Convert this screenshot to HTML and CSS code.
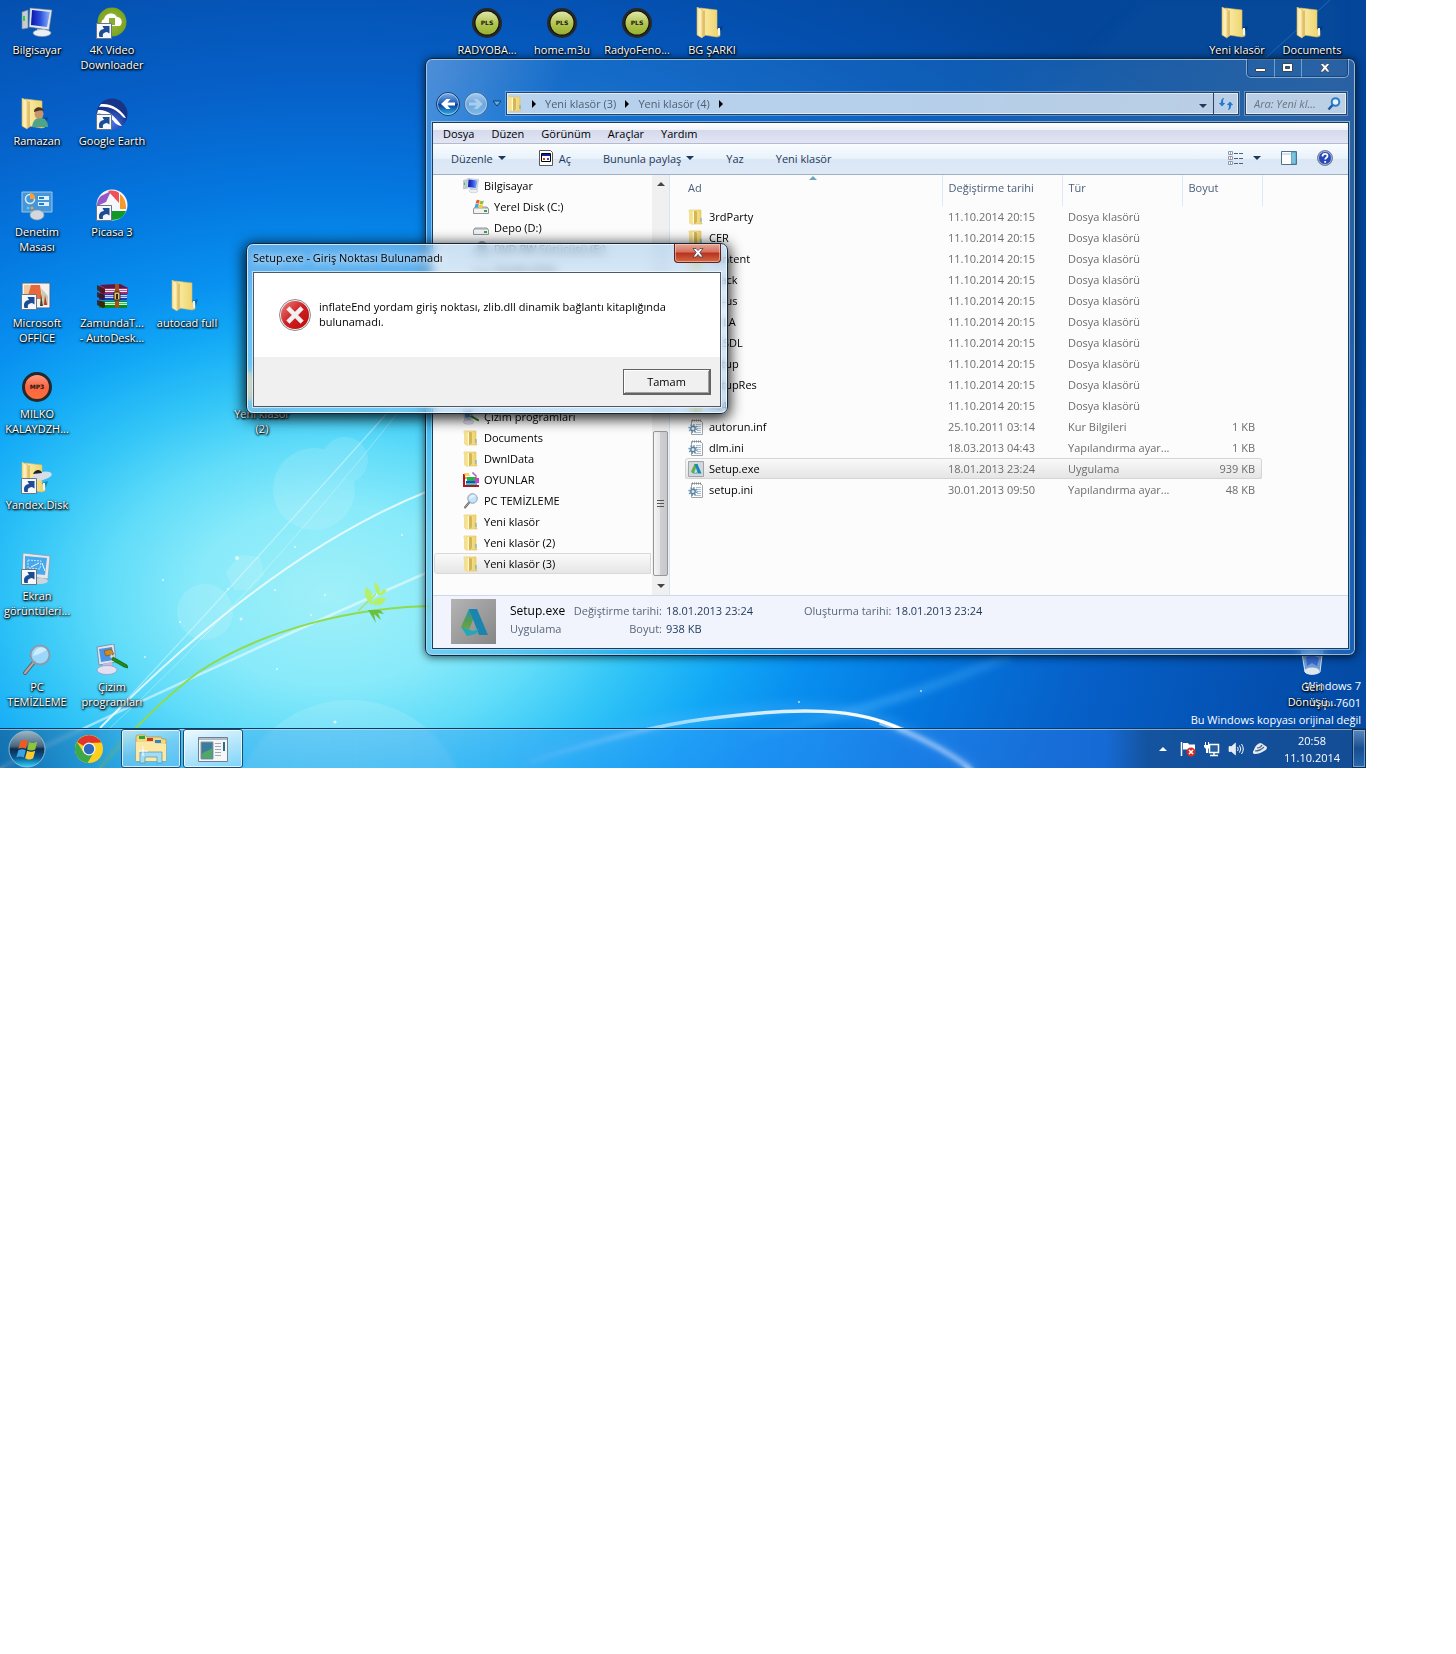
FILE: index.html
```html
<!DOCTYPE html>
<html lang="tr">
<head>
    <meta charset="UTF-8">
    <meta name="viewport" content="width=device-width, initial-scale=1.0">
    <title>Setup.exe - Giriş Noktası Bulunamadı</title>
    <link rel="stylesheet" href="styles.css">
</head>
<body>
    <!-- Shared icons -->
    <svg class="sprite" aria-hidden="true">
        <defs>
            <linearGradient id="g-folder" x1="0" x2="1"><stop offset="0" stop-color="#fdf0ae"/><stop offset="1" stop-color="#ecd068"/></linearGradient>
            <linearGradient id="g-leaf" x1="0" x2="1"><stop offset="0" stop-color="#f5dd90"/><stop offset=".5" stop-color="#fff3c0"/><stop offset="1" stop-color="#eccb74"/></linearGradient>
            <linearGradient id="g-screen" x1="0" x2="1"><stop offset="0" stop-color="#0a14a8"/><stop offset=".5" stop-color="#2b50e0"/><stop offset="1" stop-color="#8fb4f6"/></linearGradient>
            <linearGradient id="g-pls" x1="0" y1="0" x2="0" y2="1"><stop offset="0" stop-color="#dfe6a8"/><stop offset=".5" stop-color="#b4c654"/><stop offset="1" stop-color="#98b030"/></linearGradient>
            <linearGradient id="g-mp3" x1="0" y1="0" x2="0" y2="1"><stop offset="0" stop-color="#ff9a80"/><stop offset=".5" stop-color="#f86444"/><stop offset="1" stop-color="#ff7038"/></linearGradient>
            <linearGradient id="g-nav" x1="0" y1="0" x2="0" y2="1"><stop offset="0" stop-color="#7fb0e8"/><stop offset=".48" stop-color="#1f5cb4"/><stop offset=".5" stop-color="#083a92"/><stop offset="1" stop-color="#2cb8f4"/></linearGradient>
            <linearGradient id="g-glass" x1="0" y1="0" x2="0" y2="1"><stop offset="0" stop-color="#b4d4f0"/><stop offset=".5" stop-color="#74aadc"/><stop offset="1" stop-color="#86c0ea"/></linearGradient>
            <linearGradient id="g-error" x1="0" y1="0" x2="1" y2="1"><stop offset="0" stop-color="#f08080"/><stop offset=".5" stop-color="#cc1f22"/><stop offset="1" stop-color="#c00a0a"/></linearGradient>
            <linearGradient id="g-adsk" x1="0" y1="0" x2="1" y2="1"><stop offset="0" stop-color="#b4b4b4"/><stop offset="1" stop-color="#868686"/></linearGradient>
            <linearGradient id="g-aleft" x1="0" y1="0" x2="0" y2="1"><stop offset="0" stop-color="#1a9ac0"/><stop offset=".5" stop-color="#5a9a50"/><stop offset="1" stop-color="#6aae4c"/></linearGradient>
            <linearGradient id="g-orb" x1="0" y1="0" x2="0" y2="1"><stop offset="0" stop-color="#9fb6c6"/><stop offset=".42" stop-color="#48687f"/><stop offset=".5" stop-color="#0c2b4c"/><stop offset=".75" stop-color="#0b5a94"/><stop offset="1" stop-color="#29d8ff"/></linearGradient>
            <radialGradient id="g-earth" cx=".5" cy=".8"><stop offset="0" stop-color="#4a74f0"/><stop offset="1" stop-color="#183488"/></radialGradient>
            <radialGradient id="g-green"><stop offset="0" stop-color="#9cc43c"/><stop offset="1" stop-color="#7aa020"/></radialGradient>
        </defs>

        <symbol id="i-folder" viewBox="4 0 32 32">
            <path d="M20 30l9-5 2-6-6 2z" fill="#001a40" opacity=".35"/>
            <path d="M8 1l17 2v19l3 1v6l-3 1-13-2z" fill="url(#g-folder)" stroke="#d8bc60" stroke-width=".6"/>
            <path d="M5 0l6 3v27l-1 1-5-3z" fill="url(#g-leaf)" stroke="#d8b860" stroke-width=".6"/>
            <path d="M11 4l2-1v26l-2 1z" fill="#dfc06c"/>
            <path d="M26 21h2v7h-2z" fill="#eaf6ff"/>
        </symbol>
        <symbol id="i-folder-sm" viewBox="0 0 16 16">
            <path d="M1 1h12v12l1 1v1H3z" fill="url(#g-folder)" stroke="#e0c060" stroke-width=".6"/>
            <path d="M1 1l3 1v13.500L1 14z" fill="#f4e092"/>
            <path d="M6 2h2l1 1v10l-2 2H6z" fill="#d6b654"/>
            <path d="M5 2h1v13H5z" fill="#fff8d0"/>
            <path d="M12.500 9h1v4h-1z" fill="#5aa8d8"/>
        </symbol>
        <symbol id="i-shortcut" viewBox="0 0 16 16">
            <path d="M.5.5h15v15H.5z" fill="#f4f8fc" stroke="#6a7684"/>
            <path d="M3.500 14C2 9.500 4 6.500 8 6L6.500 3h7v7.500L11 8.900C7 9.500 6.500 11 7 14z" fill="#1c4c94"/>
        </symbol>
        <symbol id="i-pc" viewBox="0 0 32 32">
            <path d="M1 5l6-2v18l-6 1z" fill="#c4ccd4" stroke="#7c8894" stroke-width=".6"/>
            <path d="M2 9h2v5H2z" fill="#30d040"/>
            <path d="M9 1l22 2-3 20-20-3z" fill="#dfe7ef" stroke="#6c7c90" stroke-width=".6"/>
            <path d="M11 3l18 2-3 15-16-2z" fill="url(#g-screen)"/>
            <path d="M16 22h8v4h-8z" fill="#c2c8d0"/>
            <ellipse cx="21" cy="26" rx="9" ry="3.500" fill="#eceff3" stroke="#9098a4" stroke-width=".6"/>
        </symbol>
        <symbol id="i-magnifier" viewBox="0 0 32 32">
            <path d="M13 18L4 29" stroke="#5c6068" stroke-width="4" stroke-linecap="round"/>
            <path d="M13 18L4 29" stroke="#b8a8a0" stroke-width="2" stroke-linecap="round"/>
            <circle cx="19" cy="11" r="9.500" fill="#b4dcfa" fill-opacity=".8" stroke="#8a9cac" stroke-width="2"/>
            <path d="M12 12c5-1 8-3 14-6-3-4-12-4-14 6z" fill="#fff" opacity=".5"/>
        </symbol>
        <symbol id="i-paint" viewBox="0 0 32 32">
            <path d="M1 3l17-3 2 18-17 3z" fill="#dfe6ee" stroke="#7c8090" stroke-width=".8"/>
            <path d="M3 5l13-2 2 13-13 2z" fill="#4a94e4"/>
            <path d="M7 20l9-2v6H7z" fill="#c4bcd8"/>
            <ellipse cx="11" cy="26" rx="10" ry="4.500" fill="#e4e0f4" stroke="#9890b4" stroke-width=".7"/>
            <path d="M8 7l7-2 3 5-8 2z" fill="#d08a20" stroke="#7a4a10" stroke-width=".6"/>
            <path d="M15 10l5 4-2 2-4-3z" fill="#c8d8e8"/>
            <path d="M17 13l14 8 1 3-4-1-12-7z" fill="#1f8c14" stroke="#0c5008" stroke-width=".6"/>
        </symbol>
        <symbol id="i-rar" viewBox="0 0 32 32">
            <path d="M4 5l20-1 8 4v6H4z" fill="#9a3070"/><path d="M4 5l20-1 8 4H9z" fill="#5a1848"/><path d="M9 9h22v3H9z" fill="#f4e4f0"/><path d="M9 10h22v1H9z" fill="#a86898"/>
            <path d="M3 14h28v6H3z" fill="#1838c0"/><path d="M8 15h23v3H8z" fill="#c8d8ff"/><path d="M8 16h23v1H8z" fill="#5878d8"/>
            <path d="M3 21h28v7H3z" fill="#0c8a18"/><path d="M8 22h23v3H8z" fill="#c8f8d0"/><path d="M8 23h23v1H8z" fill="#48c058"/>
            <path d="M1 5l8 4v4l-2 1-6-4zM1 12l8 3v4l-2 1-6-3zM1 20l8 2v5l-2 1-6-3z" fill="#401008" opacity=".8"/>
            <path d="M19 4h4v24h-4z" fill="#a05020"/><path d="M18 12h6v8h-6z" fill="#d8c070" stroke="#402008"/><path d="M20 14h2v5h-2z" fill="#402008"/>
        </symbol>
        <symbol id="i-oyunlar" viewBox="0 0 16 16">
            <path d="M0 2h2v11h14v2H0z" fill="#b81420"/><path d="M1 1h5l1 3H2z" fill="#f4d070"/>
            <path d="M2 5h12v2H2z" fill="#f0a020"/><path d="M4 5h9v4H4z" fill="#20b840"/><path d="M3 9h10v2H3z" fill="#2848d0"/>
            <path d="M12 6h4v5h-4z" fill="#c840d0"/><path d="M3 11h11v2H3z" fill="#30c8c0"/><path d="M9 1h2v2h2v2" fill="none" stroke="#b030c0"/>
        </symbol>
        <symbol id="i-ini" viewBox="0 0 16 16">
            <path d="M3.500 1.500h9l2 2v12h-11z" fill="#fcfcfc" stroke="#a0a4a8"/>
            <path d="M4 1.500h9" stroke="#808488" stroke-dasharray="1 1" stroke-width="2"/>
            <path d="M8 5.500h5M9 7.500h4M9 9.500h4M9 11.500h4M7 13.500h6" stroke="#a8c0d4"/>
            <circle cx="5" cy="9.500" r="3.600" fill="none" stroke="#6f93ae" stroke-width="2" stroke-dasharray="1.400 1.400"/>
            <circle cx="5" cy="9.500" r="2.200" fill="#dce8f0" stroke="#5c82a0" stroke-width="1.400"/>
        </symbol>
        <symbol id="i-autodesk" viewBox="0 0 45 45">
            <path d="M0 0h45v45H0z" fill="url(#g-adsk)"/>
            <path d="M18 10h8L17 34l-7-6z" fill="url(#g-aleft)"/>
            <path d="M18 10h8l11 26h-9z" fill="#1a86b0"/>
            <path d="M10 28l12 4 6-2-3 5-9 2z" fill="#22a8b8"/>
        </symbol>
        <symbol id="i-disk" viewBox="0 0 16 16">
            <path d="M2 8h12l1.500 2v4.500H.5V10z" fill="#c8ccd0" stroke="#6c7278" stroke-width=".7"/>
            <path d="M1 10h14v4H1z" fill="#f0f2f4"/><path d="M11 11h3v2h-3z" fill="#3aa040"/>
        </symbol>
        <symbol id="i-flag" viewBox="0 0 40 40">
            <path d="M8 8c5-3 8-2 11 0l-3 11c-4-2-7-2-11 0z" fill="#ee5a24"/>
            <path d="M21 9c4 2 7 2 12-1l-3 12c-4 2-8 2-12 0z" fill="#8cc43c"/>
            <path d="M5 21c4-2 7-2 11 0l-3 11c-4-2-7-2-11 0z" fill="#38a4e4"/>
            <path d="M18 22c4 2 8 2 12 0l-3 11c-5 3-8 2-12 0z" fill="#fcc82c"/>
        </symbol>
        <symbol id="i-pls" viewBox="0 0 32 32">
            <circle cx="16" cy="16" r="15" fill="#26282a"/><circle cx="16" cy="16" r="12.500" fill="#0c0e08"/>
            <circle cx="16" cy="16" r="11.500" fill="url(#g-pls)"/>
        </symbol>
    </svg>

    <main class="desktop">
        <!-- Wallpaper -->
        <svg class="wallpaper" viewBox="0 0 1366 768" preserveAspectRatio="xMidYMid slice" aria-hidden="true">
            <defs>
                <radialGradient id="w-sky" gradientUnits="userSpaceOnUse" cx="0" cy="0" r="1" gradientTransform="translate(330 595) scale(1120 750)">
                    <stop offset="0" stop-color="#a0f0f8"/><stop offset=".12" stop-color="#88eafa"/><stop offset=".2" stop-color="#60dcf9"/>
                    <stop offset=".28" stop-color="#30c4f7"/><stop offset=".36" stop-color="#12a8f6"/><stop offset=".43" stop-color="#0890f0"/>
                    <stop offset=".54" stop-color="#0478e0"/><stop offset=".68" stop-color="#0660c8"/><stop offset=".84" stop-color="#0450b0"/><stop offset="1" stop-color="#03469a"/>
                </radialGradient>
                <linearGradient id="w-arc" x1="0" x2="1"><stop offset="0" stop-color="#fff" stop-opacity=".1"/><stop offset=".5" stop-color="#fff" stop-opacity=".8"/><stop offset=".8" stop-color="#fff"/><stop offset="1" stop-color="#fff" stop-opacity=".7"/></linearGradient>
                <linearGradient id="w-streak" x1="0" x2="1"><stop offset="0" stop-color="#50b8ff" stop-opacity=".1"/><stop offset=".5" stop-color="#50b8ff" stop-opacity=".4"/><stop offset="1" stop-color="#50b8ff" stop-opacity=".2"/></linearGradient>
                <filter id="w-soft" x="-20%" y="-20%" width="140%" height="140%"><feGaussianBlur stdDeviation="6"/></filter>
                <filter id="w-haze" x="-20%" y="-50%" width="140%" height="200%"><feGaussianBlur stdDeviation="3"/></filter>
                <filter id="w-glow" x="-20%" y="-50%" width="140%" height="200%"><feGaussianBlur stdDeviation=".7"/></filter>
            </defs>
            <rect width="1366" height="768" fill="url(#w-sky)"/>
            <g fill="#fff" opacity=".12">
                <circle cx="314" cy="489" r="41"/><circle cx="345" cy="460" r="23"/>
                <path d="M240 555l20 2 4 18-14 15-16 0-8-18z"/><circle cx="205" cy="612" r="28"/>
                <circle cx="350" cy="818" r="118"/>
            </g>
            <path d="M1145 0L840 300h500V0z" fill="#2060a0" opacity=".12" filter="url(#w-soft)"/>
            <path d="M1330 0L1250 72" stroke="#5090c8" opacity=".4"/>
            <g fill="none" stroke="#fff" filter="url(#w-glow)">
                <path d="M100 728Q230 590 430 365" stroke-width="1.200" opacity=".4"/>
                <path d="M110 728Q250 600 400 410" opacity=".3"/>
                <path d="M100 728Q270 555 426 492" stroke-width="2" opacity=".75"/>
                <path d="M0 768Q200 672 426 573" stroke-width="2.500" opacity=".5"/>
            </g>
            <path d="M750 735Q900 705 1010 655" fill="none" stroke="url(#w-streak)" stroke-width="10" filter="url(#w-haze)"/>
            <path d="M520 762Q640 722 705 718C800 702 860 708 902 730Q950 752 976 772" fill="none" stroke="#60c0ff" stroke-width="9" opacity=".35" filter="url(#w-soft)"/>
            <path d="M530 762Q640 727 705 719C800 706 860 708 902 730Q950 752 980 776" fill="none" stroke="url(#w-arc)" stroke-width="3.500" filter="url(#w-glow)"/>
            <path d="M880 722Q940 742 980 776" fill="none" stroke="#fff" stroke-width="6" opacity=".5" filter="url(#w-glow)"/>
            <path d="M100 768Q150 708 200 671C260 632 350 606 440 606" fill="none" stroke="#8edc4c" stroke-width="2"/>
            <path d="M358 611l18-17" stroke="#a4e460" stroke-width="1.200"/>
            <g fill="#b4f06c">
                <path d="M370 604c-6-8-6-12-4-17 6 4 8 9 6 17zM372 604c3-7 9-7 14-6-2 7-8 9-14 6zM378 595c-4-6-4-9-3-13 4 3 5 7 5 11 2-4 5-4 7-3-2 4-5 6-9 5z"/>
                <path d="M368 610l8 13-2-9 7 6-3-7 6 1-4-4z" fill="#6cc040"/>
            </g>
            <g fill="#fff" opacity=".7">
                <circle cx="237" cy="558" r="2"/><circle cx="295" cy="547" r="1"/><circle cx="241" cy="619" r="1.500"/><circle cx="325" cy="595" r="1"/><circle cx="275" cy="590" r="1"/>
                <circle cx="163" cy="580" r="1"/><circle cx="145" cy="657" r="1"/><circle cx="228" cy="589" r="1"/><circle cx="311" cy="615" r="1"/><circle cx="402" cy="535" r="1"/>
                <circle cx="277" cy="669" r="1"/><circle cx="335" cy="722" r="1.500"/><circle cx="921" cy="691" r="1"/><circle cx="799" cy="702" r="1"/><circle cx="180" cy="622" r="1"/>
            </g>
        </svg>

        <div class="workspace">
            <p class="watermark">Windows 7<br>Yapı 7601<br>Bu Windows kopyası orijinal değil</p>

            <nav class="icons">
                <a href="#" class="col-1 row-1"><svg><use href="#i-pc"/></svg>Bilgisayar</a>
                <a href="#" class="col-1 row-2"><svg viewBox="0 0 32 32"><use href="#i-folder"/><path d="M11 29c1-8 5-9 8-9s8 1 8 9z" fill="#4ea488"/><circle cx="18" cy="16" r="4.500" fill="#c8946c"/><path d="M13 14c0-6 9-6 10-1-4-1-6 0-10 1z" fill="#4c3424"/></svg>Ramazan</a>
                <a href="#" class="col-1 row-3"><svg viewBox="0 0 32 32"><path d="M1 3h30v20H1z" fill="#4896d8" stroke="#98c8ec"/><circle cx="9" cy="10" r="4.500" fill="none" stroke="#d4ecfc" stroke-width="1.500"/><path d="M9 4a5 5 0 0 1 5 6H9z" fill="#f8a030"/><path d="M17 7h11v4H17zM17 13h11v4H17z" fill="#d8f0ff"/><path d="M18 8h5v2h-5zM18 14h5v2h-5z" fill="#207cc8"/><circle cx="7" cy="19" r="1.500" fill="#50c8f8"/><circle cx="11" cy="19" r="1.500" fill="#f8a030"/><ellipse cx="16" cy="26" rx="7" ry="5" fill="#d4d8dc" stroke="#90989c" stroke-width=".6"/></svg>Denetim<br>Masası</a>
                <a href="#" class="col-1 row-4"><svg viewBox="0 0 32 32"><path d="M1 3h28v25H1z" fill="#f4f0ec" stroke="#406898"/><path d="M3 5h11l-6 10H3z" fill="#f0c8a0"/><path d="M10 5h9l2 14H6z" fill="#e8683c"/><path d="M20 8l7 8v9h-5z" fill="#c8ccb0"/><path d="M20 14l2 12h-3z" fill="#50402c"/><path d="M24 15l2 10h-3z" fill="#c03020"/><use href="#i-shortcut" x="0" y="14" width="16" height="16"/></svg>Microsoft<br>OFFİCE</a>
                <a href="#" class="col-1 row-5"><svg viewBox="0 0 32 32"><circle cx="16" cy="16" r="15" fill="#26282a"/><circle cx="16" cy="16" r="12" fill="url(#g-mp3)"/><text class="badge-text" x="16" y="18">MP3</text></svg>MILKO<br>KALAYDZH...</a>
                <a href="#" class="col-1 row-6"><svg viewBox="0 0 32 32"><use href="#i-folder"/><ellipse cx="21" cy="14" rx="10" ry="4" fill="#d8dce4" transform="rotate(-12 21 14)"/><path d="M12 12c2-5 8-5 9-1z" fill="#202428"/><use href="#i-shortcut" x="0" y="16" width="16" height="16"/></svg>Yandex.Disk</a>
                <a href="#" class="col-1 row-7"><svg viewBox="0 0 32 32"><path d="M2 0l27 3-2 23-26-3z" fill="#e4e8ec" stroke="#8c98a4" stroke-width=".7"/><path d="M4 3l22 2-2 17-20-2z" fill="#48a8ec"/><path d="M7 7l13 1-1 8-12-1z" fill="none" stroke="#c4e8fc" stroke-dasharray="2 1"/><path d="M10 14l8-4M21 10l3 8" stroke="#f0f8ff"/><ellipse cx="19" cy="28" rx="8" ry="3" fill="#d0d4d8"/><use href="#i-shortcut" x="0" y="16" width="16" height="16"/></svg>Ekran<br>görüntüleri...</a>
                <a href="#" class="col-1 row-8"><svg><use href="#i-magnifier"/></svg>PC<br>TEMİZLEME</a>
                <a href="#" class="col-2 row-1"><svg viewBox="0 0 32 32"><circle cx="16" cy="15" r="14.500" fill="url(#g-green)"/><path d="M7 19a4 4 0 0 1 1-7c1-6 10-8 13-2 5 0 6 6 3 9z" fill="#fff"/><path d="M13 11h6v7h-6z" fill="#88ac34"/><use href="#i-shortcut" x="0" y="16" width="16" height="16"/></svg>4K Video<br>Downloader</a>
                <a href="#" class="col-2 row-2"><svg viewBox="0 0 32 32"><circle cx="16" cy="16" r="15.500" fill="url(#g-earth)"/><path d="M5 6c10-1 20 5 25 14-2 0-3-1-4-2C20 11 12 8 3 9zM2 12c9-1 17 6 24 16-2 0-5-1-7-3C14 18 8 15 1 16z" fill="#fff"/><use href="#i-shortcut" x="0" y="16" width="16" height="16"/></svg>Google Earth</a>
                <a href="#" class="col-2 row-3"><svg viewBox="0 0 32 32"><circle cx="16" cy="16" r="15.500" fill="#f4f8fc"/><path d="M15 2L5 7c-4 4-4 8-4 10l9-4z" fill="#9858c8"/><path d="M12 2c5-1 9 0 11 2v10z" fill="#f05058"/><path d="M24 5c5 4 6 9 6 15h-6z" fill="#f89828"/><path d="M30 22c-2 6-7 9-14 9v-9z" fill="#109828"/><use href="#i-shortcut" x="0" y="16" width="16" height="16"/></svg>Picasa 3</a>
                <a href="#" class="col-2 row-4"><svg><use href="#i-rar"/></svg>ZamundaT...<br>- AutoDesk...</a>
                <a href="#" class="col-2 row-8"><svg><use href="#i-paint"/></svg>Çizim<br>programları</a>
                <a href="#" class="col-3 row-4"><svg><use href="#i-folder"/></svg>autocad full</a>
                <a href="#" class="col-4 row-5"><svg><use href="#i-folder"/></svg>Yeni klasör<br>(2)</a>
                <a href="#" class="col-7 row-1"><svg viewBox="0 0 32 32"><use href="#i-pls"/><text class="badge-text" x="16" y="18">PLS</text></svg>RADYOBA...</a>
                <a href="#" class="col-8 row-1"><svg viewBox="0 0 32 32"><use href="#i-pls"/><text class="badge-text" x="16" y="18">PLS</text></svg>home.m3u</a>
                <a href="#" class="col-9 row-1"><svg viewBox="0 0 32 32"><use href="#i-pls"/><text class="badge-text" x="16" y="18">PLS</text></svg>RadyoFeno...</a>
                <a href="#" class="col-10 row-1"><svg><use href="#i-folder"/></svg>BG ŞARKI</a>
                <a href="#" class="col-17 row-1"><svg><use href="#i-folder"/></svg>Yeni klasör</a>
                <a href="#" class="col-18 row-1"><svg><use href="#i-folder"/></svg>Documents</a>
                <a href="#" class="col-18 row-8"><svg viewBox="0 0 32 32"><path d="M5 3h22l-3 25c-3 3-13 3-15 0z" fill="#b8d4ec" fill-opacity=".6" stroke="#d4e8f8"/><path d="M10 13l6-2 7 3-2 8-5-3-5 3z" fill="#2860d8" opacity=".8"/><ellipse cx="16" cy="27" rx="7.500" ry="3.500" fill="#e0e6ec"/></svg>Geri<br>Dönüşü...</a>
            </nav>

            <!-- Explorer window -->
            <section class="window explorer" aria-label="Yeni klasör (4)">
                <div class="caption">
                    <div class="caption-buttons">
                        <button type="button" class="min" aria-label="Simge durumuna küçült"><svg viewBox="0 0 12 10"><path d="M.5 5.500h10v3H.5z" fill="#fff" stroke="#3c4450"/></svg></button>
                        <button type="button" class="max" aria-label="Ekranı kapla"><svg viewBox="0 0 12 10"><path d="M.5.500h10v8H.5zM3.500 3.500h4v2h-4z" fill="#fff" fill-rule="evenodd" stroke="#3c4450"/></svg></button>
                        <button type="button" class="close" aria-label="Kapat"><svg viewBox="0 0 12 10"><path d="M1 .5h3l2 2 2-2h3L7.800 4.500 11 9H8L6 6.500 4 9H1l3.200-4.500z" fill="#fff" stroke="#3c4450" stroke-width=".8"/></svg></button>
                    </div>
                </div>
                <div class="navbar">
                    <button type="button" class="round" aria-label="Geri"><svg viewBox="0 0 24 24"><circle cx="12" cy="12" r="11.500" fill="url(#g-nav)" stroke="#143a70"/><circle cx="12" cy="12" r="10.500" fill="none" stroke="#c8e0f8" stroke-opacity=".7"/><path d="M19 10.500h-7.500L14.500 7h-4L5 12l5.500 5h4l-3-3.500H19z" fill="#fff"/></svg></button>
                    <button type="button" class="round" aria-label="İleri"><svg viewBox="0 0 24 24"><circle cx="12" cy="12" r="11.500" fill="url(#g-glass)" fill-opacity=".9" stroke="#3c6ca4"/><circle cx="12" cy="12" r="10.500" fill="none" stroke="#d0e4f8" stroke-opacity=".6"/><path d="M5 10.500h7.500L9.500 7h4l5.500 5-5.500 5h-4l3-3.500H5z" fill="#a8cdee"/></svg></button>
                    <button type="button" class="recent" aria-label="Son sayfalar"><svg viewBox="0 0 10 7"><path d="M1 1h8L5 6z" fill="#5cb4ec" stroke="#123c70"/></svg></button>
                    <div class="address">
                        <svg class="i16"><use href="#i-folder-sm"/></svg>
                        <span class="sep"></span>
                        <button type="button">Yeni klasör (3)</button>
                        <span class="sep"></span>
                        <button type="button">Yeni klasör (4)</button>
                        <span class="sep"></span>
                        <button type="button" class="history" aria-label="Önceki konumlar"><span class="arrow"></span></button>
                        <button type="button" class="refresh" aria-label="Yenile"><svg viewBox="0 0 16 14"><path d="M0 5.500h2.500C2.500 2.500 4 .5 7 0 5.500 2 5.500 3.500 5.500 5.500H8L4 10zM8 8.500L12 4l4 4.500h-2.500c0 3-1.500 5-4.500 5.500 1.500-2 1.500-3.500 1.500-5.500z" fill="#2878c8" stroke="#e8f4ff" stroke-width=".5"/></svg></button>
                    </div>
                    <div class="search">
                        <input type="text" value="Ara: Yeni kl..." aria-label="Ara">
                        <svg viewBox="0 0 14 14"><circle cx="8.500" cy="5" r="3.800" fill="#e4f2fc" stroke="#2c7cc8" stroke-width="2"/><path d="M5.500 8L1.500 12.500" stroke="#1c5ca8" stroke-width="2.500"/></svg>
                    </div>
                </div>

                <div class="client">
                    <div class="menubar">
                        <button type="button">Dosya</button>
                        <button type="button">Düzen</button>
                        <button type="button">Görünüm</button>
                        <button type="button">Araçlar</button>
                        <button type="button">Yardım</button>
                    </div>
                    <div class="toolbar">
                        <button type="button">Düzenle <span class="arrow"></span></button>
                        <button type="button"><svg class="i16" viewBox="0 0 16 16"><path d="M1.500.500h11l2 2v13h-13z" fill="#fff" stroke="#585858"/><path d="M3.500 3.500h9v8h-9z" fill="#fff" stroke="#000"/><path d="M4 4h8v2H4z" fill="#1020a0"/><path d="M5 8h2v2H5z" fill="#e03020"/><path d="M9 8h2v2H9z" fill="#3048d0"/></svg>Aç</button>
                        <button type="button">Bununla paylaş <span class="arrow"></span></button>
                        <button type="button">Yaz</button>
                        <button type="button">Yeni klasör</button>
                        <div class="toolbar-right">
                            <button type="button" aria-label="Görünüm"><svg class="i16" viewBox="0 0 16 14"><path d="M.5.500h4v3h-4zM.5 5.500h4v3h-4zM.5 10.500h4v3h-4z" fill="#fff" stroke="#8c9cb0"/><path d="M2 1.500h1v1H2zM2 11.500h1v1H2z" fill="#2050c0"/><path d="M2 6.500h1v1H2z" fill="#e02020"/><path d="M6 2.500h10M6 7.500h10M6 12.500h10" stroke="#50607c" stroke-dasharray="4 1"/></svg><span class="arrow"></span></button>
                            <button type="button" aria-label="Önizleme"><svg class="i16" viewBox="0 0 16 14"><path d="M.5.500h15v13H.5z" fill="#fff" stroke="#50708c"/><path d="M1 3h9" stroke="#b0c0d0"/><path d="M10.500 1h4.500v12h-4.500z" fill="#78c4e0" stroke="#40809c" stroke-width=".6"/></svg></button>
                            <button type="button" aria-label="Yardım al"><svg class="i16" viewBox="0 0 16 16"><circle cx="8" cy="8" r="7.500" fill="#2848b8" stroke="#80848c"/><circle cx="8" cy="8" r="6.500" fill="none" stroke="#c8d0e4" stroke-width=".8"/><path d="M5.500 6.500C5.500 3 10.500 3 10.500 6c0 1.800-2.300 1.800-2.300 3.500M8.200 11v1.800" fill="none" stroke="#fff" stroke-width="1.800"/></svg></button>
                        </div>
                    </div>

                    <div class="panes">
                        <div class="tree">
                            <ul>
                                <li><svg class="i16"><use href="#i-pc"/></svg>Bilgisayar</li>
                                <li class="sub"><svg class="i16" viewBox="0 0 16 16"><use href="#i-disk"/><use href="#i-flag" x="1" y="-1" width="12" height="12"/></svg>Yerel Disk (C:)</li>
                                <li class="sub"><svg class="i16"><use href="#i-disk"/></svg>Depo (D:)</li>
                                <li class="sub"><svg class="i16" viewBox="0 0 16 16"><circle cx="9" cy="5" r="5" fill="#a0a8b0"/><use href="#i-disk"/></svg>DVD RW Sürücüsü (E:)</li>
                                <li class="sub"><svg class="i16"><use href="#i-disk"/></svg>Yandex.Disk</li>
                            </ul>
                            <ul class="folders">
                                <li><svg class="i16"><use href="#i-paint"/></svg>Çizim programları</li>
                                <li><svg class="i16"><use href="#i-folder-sm"/></svg>Documents</li>
                                <li><svg class="i16"><use href="#i-folder-sm"/></svg>DwnlData</li>
                                <li><svg class="i16"><use href="#i-oyunlar"/></svg>OYUNLAR</li>
                                <li><svg class="i16"><use href="#i-magnifier"/></svg>PC TEMİZLEME</li>
                                <li><svg class="i16"><use href="#i-folder-sm"/></svg>Yeni klasör</li>
                                <li><svg class="i16"><use href="#i-folder-sm"/></svg>Yeni klasör (2)</li>
                                <li class="selected"><svg class="i16"><use href="#i-folder-sm"/></svg>Yeni klasör (3)</li>
                            </ul>
                        </div>
                        <div class="scrollbar">
                            <span class="arrow up"></span>
                            <div class="thumb"></div>
                            <span class="arrow"></span>
                        </div>
                        <div class="files">
                            <table>
                                <colgroup><col class="c-name"><col class="c-date"><col class="c-type"><col class="c-size"></colgroup>
                                <thead>
                                    <tr><th>Ad<span class="sort"></span></th><th>Değiştirme tarihi</th><th>Tür</th><th>Boyut</th></tr>
                                </thead>
                                <tbody>
                                    <tr><td><svg class="i16"><use href="#i-folder-sm"/></svg>3rdParty</td><td>11.10.2014 20:15</td><td>Dosya klasörü</td><td></td></tr>
                                    <tr><td><svg class="i16"><use href="#i-folder-sm"/></svg>CER</td><td>11.10.2014 20:15</td><td>Dosya klasörü</td><td></td></tr>
                                    <tr><td><svg class="i16"><use href="#i-folder-sm"/></svg>Content</td><td>11.10.2014 20:15</td><td>Dosya klasörü</td><td></td></tr>
                                    <tr><td><svg class="i16"><use href="#i-folder-sm"/></svg>Crack</td><td>11.10.2014 20:15</td><td>Dosya klasörü</td><td></td></tr>
                                    <tr><td><svg class="i16"><use href="#i-folder-sm"/></svg>en-us</td><td>11.10.2014 20:15</td><td>Dosya klasörü</td><td></td></tr>
                                    <tr><td><svg class="i16"><use href="#i-folder-sm"/></svg>EULA</td><td>11.10.2014 20:15</td><td>Dosya klasörü</td><td></td></tr>
                                    <tr><td><svg class="i16"><use href="#i-folder-sm"/></svg>NLSDL</td><td>11.10.2014 20:15</td><td>Dosya klasörü</td><td></td></tr>
                                    <tr><td><svg class="i16"><use href="#i-folder-sm"/></svg>Setup</td><td>11.10.2014 20:15</td><td>Dosya klasörü</td><td></td></tr>
                                    <tr><td><svg class="i16"><use href="#i-folder-sm"/></svg>SetupRes</td><td>11.10.2014 20:15</td><td>Dosya klasörü</td><td></td></tr>
                                    <tr><td><svg class="i16"><use href="#i-folder-sm"/></svg>x64</td><td>11.10.2014 20:15</td><td>Dosya klasörü</td><td></td></tr>
                                    <tr><td><svg class="i16"><use href="#i-ini"/></svg>autorun.inf</td><td>25.10.2011 03:14</td><td>Kur Bilgileri</td><td>1 KB</td></tr>
                                    <tr><td><svg class="i16"><use href="#i-ini"/></svg>dlm.ini</td><td>18.03.2013 04:43</td><td>Yapılandırma ayar...</td><td>1 KB</td></tr>
                                    <tr class="selected"><td><svg class="i16" viewBox="0 0 16 16"><path d="M.5.500h15v15H.5z" fill="#d4d8da" stroke="#a0a4a8"/><path d="M6.500 3h3L6 12l-3-1.500z" fill="#6aae3c"/><path d="M6.500 3h3l4 9.500H10z" fill="#1488c0"/><path d="M3 10.500l4.500 1.500 2-1v1.500H5z" fill="#20a8b0"/></svg>Setup.exe</td><td>18.01.2013 23:24</td><td>Uygulama</td><td>939 KB</td></tr>
                                    <tr><td><svg class="i16"><use href="#i-ini"/></svg>setup.ini</td><td>30.01.2013 09:50</td><td>Yapılandırma ayar...</td><td>48 KB</td></tr>
                                </tbody>
                            </table>
                        </div>
                    </div>

                    <div class="details">
                        <svg class="preview"><use href="#i-autodesk"/></svg>
                        <div class="props">
                            <strong>Setup.exe</strong><span class="key">Değiştirme tarihi:</span><span>18.01.2013 23:24</span><span class="key">Oluşturma tarihi:</span><span>18.01.2013 23:24</span>
                            <span class="kind">Uygulama</span><span class="key">Boyut:</span><span>938 KB</span>
                        </div>
                    </div>
                </div>
            </section>

            <!-- Error dialog -->
            <section class="window dialog" role="alertdialog" aria-labelledby="dialog-title">
                <div class="dialog-title">
                    <h1 id="dialog-title">Setup.exe - Giriş Noktası Bulunamadı</h1>
                    <button type="button" class="dialog-close" aria-label="Kapat"><svg viewBox="0 0 12 10"><path d="M1 .5h3l2 2 2-2h3L7.800 4.500 11 9H8L6 6.500 4 9H1l3.200-4.500z" fill="#fff" stroke="#3c4450" stroke-width=".8"/></svg></button>
                </div>
                <div class="dialog-client">
                    <div class="dialog-body">
                        <svg viewBox="0 0 32 32"><circle cx="16" cy="16" r="15.500" fill="#f4f4f4" stroke="#8c8c8c"/><circle cx="16" cy="16" r="14" fill="url(#g-error)"/><path d="M10.500 10.500l11 11M21.500 10.500l-11 11" stroke="#f0f0f0" stroke-width="4.500" stroke-linecap="square"/></svg>
                        <p>inflateEnd yordam giriş noktası, zlib.dll dinamik bağlantı kitaplığında bulunamadı.</p>
                    </div>
                    <div class="dialog-footer">
                        <button type="button">Tamam</button>
                    </div>
                </div>
            </section>
        </div>

        <footer class="taskbar">
            <button type="button" class="start" aria-label="Başlat"><svg viewBox="0 0 38 38"><circle cx="19" cy="19" r="18" fill="url(#g-orb)" stroke="#8cb8d4"/><use href="#i-flag" x="7" y="6" width="27" height="27"/></svg></button>
            <button type="button" class="chrome" aria-label="Google Chrome"><svg viewBox="0 0 28 28"><circle cx="14" cy="14" r="14" fill="#fcd01c"/><path d="M14 14L2 7a14 14 0 0 1 24.200.500L14 8z" fill="#e0352c"/><path d="M1.900 7A14 14 0 0 0 12.500 28L19 17l-10 1z" fill="#3ca848"/><circle cx="14" cy="14" r="6.500" fill="#f0f4f8"/><circle cx="14" cy="14" r="5.200" fill="#2c6cc0"/></svg></button>
            <button type="button" class="task" aria-label="Windows Gezgini"><svg viewBox="0 0 32 30"><path d="M1 3l1-2h8l2 2h14l1 2h4v22H1z" fill="#f4d880" stroke="#b89040" stroke-width=".7"/><path d="M4 2h6v3H4z" fill="#28a838"/><path d="M12 4h6v3h-6z" fill="#c83828"/><path d="M20 6h6v3h-6z" fill="#2c84d4"/><path d="M1 8h18l2 2h10v17H1z" fill="#fae8a4"/><path d="M5 18h22v11h-5v-6H10v6H5z" fill="#a4dcf4" stroke="#4c94b8" stroke-width=".7"/><path d="M8 12v10M4 17h9" stroke="#fff"/></svg></button>
            <button type="button" class="task active" aria-label="Setup.exe"><svg viewBox="0 0 32 30"><path d="M1.500 3.500h29v24h-29z" fill="#f4f6f8" stroke="#708090"/><path d="M2 4h28v2H2z" fill="#b0bcc8"/><path d="M4 8h12v17H4z" fill="#3c7c9c" stroke="#8c98a4"/><path d="M5 20c4-4 7-3 10-6v10H5z" fill="#50a868"/><path d="M18 9.500h6M18 12.500h6M18 15.500h6M18 18.500h6M18 21.500h6" stroke="#a0a8b0"/><path d="M26 8h2v9h-2z" fill="#2c6c8c"/></svg></button>
            <div class="tray">
                <span class="arrow up"></span>
                <svg class="i16" viewBox="0 0 16 16"><path d="M1.500 1v14" stroke="#fff" stroke-width="1.500"/><path d="M3 2h5l1 1.500h6V10H9L8 8.500H3z" fill="#fff"/><circle cx="11" cy="11" r="4.500" fill="#d82c20"/><path d="M9 9l4 4M13 9l-4 4" stroke="#fff" stroke-width="1.500"/></svg>
                <svg class="i16" viewBox="0 0 16 16"><path d="M5.500 3.500h9v8h-9z" fill="#28609c" stroke="#fff" stroke-width="1.500"/><path d="M6 14.500h8M10 12v2" stroke="#fff" stroke-width="1.400"/><path d="M1.500 1v3M4.500 1v3" stroke="#fff"/><path d="M0 4h6v2L4 8v4H2V8L0 6z" fill="#fff"/></svg>
                <svg class="i16" viewBox="0 0 16 16"><path d="M1 5.500h2.500L7.500 2v12l-4-3.500H1z" fill="#e8ecf0" stroke="#fff" stroke-width=".6"/><path d="M9.500 6q1.500 2 0 4M11.500 4.500q2.500 3.500 0 7M13.500 3q3.500 5 0 10" fill="none" stroke="#fff"/></svg>
                <svg class="i16" viewBox="0 0 16 16"><path d="M2 9C3 5 6 2 9 2l6 4c0 2-1 3-3 4-3 2-6 3-9 3-2 0-3-2-1-4z" fill="#e8ecf0"/><path d="M3 10c3 0 7-2 9-4M5 7c2 0 4-1 5-3" fill="none" stroke="#3c6490" stroke-width="1.200"/></svg>
                <time datetime="2014-10-11T20:58">20:58<br>11.10.2014</time>
                <button type="button" class="show-desktop" aria-label="Masaüstünü göster"></button>
            </div>
        </footer>
    </main>
</body>
</html>
```

FILE: styles.css
```css
* {
    box-sizing: border-box;
}
body {
    margin: 0 90px 0 0;
    background: #fff;
    font: 11px/15px "Open Sans", "Noto Sans", sans-serif;
    color: #000;
}
button {
    border: none;
    padding: 0;
    background: none;
    font: inherit;
    color: inherit;
    cursor: pointer;
}
svg {
    display: block;
    flex-shrink: 0;
}
ul {
    list-style: none;
    margin: 0;
    padding: 0;
}
.sprite {
    position: absolute;
    width: 0;
    height: 0;
}
.i16 {
    width: 16px;
    height: 16px;
}
.arrow {
    display: inline-block;
    border: 4px solid transparent;
    border-top-color: #1e395b;
    border-bottom: none;
}
.arrow.up {
    border-top: none;
    border-bottom: 4px solid #444;
}
.badge-text {
    font: bold 6px "DejaVu Sans", sans-serif;
    text-anchor: middle;
    text-shadow: none;
    fill: #1a1a10;
}

/* Desktop */
.desktop {
    position: relative;
    display: flex;
    flex-direction: column;
    aspect-ratio: 1366 / 768;
    overflow: hidden;
}
.wallpaper {
    position: absolute;
    inset: 0;
    width: 100%;
    height: 100%;
}
.workspace {
    position: relative;
    flex: 1;
}
.icons {
    display: grid;
    grid-template-columns: repeat(18, 75px);
    grid-template-rows: repeat(8, 91px);
}
.icons a {
    position: relative;
    padding: 7px 1px 0 0;
    color: #fff;
    text-align: center;
    text-decoration: none;
    white-space: nowrap;
    text-shadow: 1px 1px 2px #000, 0 1px 2px #000, 0 0 3px rgba(0, 0, 0, 0.6);
}
.icons svg {
    width: 32px;
    height: 32px;
    margin: 0 auto 3px;
}
.col-1 { grid-column: 1; }
.col-2 { grid-column: 2; }
.col-3 { grid-column: 3; }
.col-4 { grid-column: 4; }
.col-7 { grid-column: 7; }
.col-8 { grid-column: 8; }
.col-9 { grid-column: 9; }
.col-10 { grid-column: 10; }
.col-17 { grid-column: 17; }
.col-18 { grid-column: 18; }
.row-1 { grid-row: 1; }
.row-2 { grid-row: 2; }
.row-3 { grid-row: 3; }
.row-4 { grid-row: 4; }
.row-5 { grid-row: 5; }
.row-6 { grid-row: 6; }
.row-7 { grid-row: 7; }
.row-8 { grid-row: 8; }
.watermark {
    position: absolute;
    right: 5px;
    bottom: 0;
    margin: 0;
    color: #fff;
    line-height: 17px;
    text-align: right;
}

/* Windows */
.window {
    position: absolute;
    display: flex;
    flex-direction: column;
    padding: 0 6px 6px;
    border: 1px solid #10283f;
    border-radius: 7px;
    backdrop-filter: blur(5px);
}
.explorer {
    top: 58px;
    right: 10px;
    bottom: 72px;
    left: 425px;
    background: linear-gradient(115deg, rgba(170, 205, 240, 0.45), rgba(60, 150, 220, 0.3) 12%, rgba(40, 130, 210, 0.3) 45%, rgba(120, 150, 180, 0.35) 80%, rgba(60, 130, 210, 0.4));
    box-shadow: inset 0 0 0 1px rgba(190, 225, 250, 0.7), 0 1px 8px rgba(0, 0, 0, 0.7);
}
.caption {
    display: flex;
    justify-content: flex-end;
}
.caption-buttons {
    display: flex;
    border: 1px solid rgba(190, 220, 245, 0.6);
    border-top: none;
    border-radius: 0 0 5px 5px;
    box-shadow: inset 0 0 0 1px rgba(10, 40, 80, 0.5);
}
.caption-buttons button {
    display: grid;
    place-items: center;
    width: 27px;
    height: 18px;
}
.caption-buttons button + button {
    border-left: 1px solid rgba(190, 220, 245, 0.5);
}
.caption-buttons .close {
    width: 47px;
}
.caption-buttons svg,
.dialog-close svg {
    width: 12px;
    height: 10px;
}
.navbar {
    display: flex;
    align-items: center;
    gap: 4px;
    height: 44px;
    padding: 7px 2px 0 4px;
}
.round svg {
    width: 24px;
    height: 24px;
}
.recent svg {
    width: 10px;
    height: 7px;
}
.address,
.search {
    display: flex;
    align-items: center;
    height: 23px;
    border: 1px solid #24466e;
    background: rgba(225, 235, 245, 0.8);
    box-shadow: inset 0 0 0 1px rgba(255, 255, 255, 0.6), 0 0 0 1px rgba(190, 220, 245, 0.4);
}
.address {
    flex: 1;
    color: #4e6074;
}
.sep {
    margin: 0 9px;
    border: 4px solid transparent;
    border-left-color: #000;
    border-right: none;
}
.address .history {
    margin-left: auto;
    padding: 0 6px;
}
.refresh {
    display: grid;
    place-items: center;
    align-self: stretch;
    width: 25px;
    border-left: 1px solid #24466e;
}
.refresh svg {
    width: 16px;
    height: 14px;
}
.search {
    width: 102px;
    margin-left: 2px;
    padding: 0 5px 0 8px;
}
.search input {
    flex: 1;
    min-width: 0;
    border: none;
    padding: 0;
    background: none;
    font: italic 11px/15px "Open Sans", sans-serif;
    color: #6a7684;
}
.search svg {
    width: 14px;
    height: 14px;
}
.client {
    flex: 1;
    display: flex;
    flex-direction: column;
    min-height: 0;
    border: 1px solid #1a3c60;
    background: #fcfcfc;
    box-shadow: 0 0 0 1px rgba(190, 225, 250, 0.6);
}
.menubar {
    display: flex;
    gap: 17px;
    height: 21px;
    padding-left: 10px;
    border-bottom: 1px solid #b4bccc;
    background: linear-gradient(#fff, #f2f4fa 33%, #d4daec 34%, #e2e5f4);
}
.toolbar {
    display: flex;
    align-items: center;
    gap: 32px;
    height: 31px;
    padding: 0 15px 2px 18px;
    border-bottom: 1px solid #a0afc3;
    background: linear-gradient(#fafdff, #e8f2fb 49%, #dce7f5 50%, #dde9f7);
    color: #1e395b;
}
.toolbar button {
    display: flex;
    align-items: center;
    gap: 5px;
}
.toolbar-right {
    display: flex;
    gap: 20px;
    margin-left: auto;
}
.toolbar-right button:first-child {
    gap: 9px;
}
.panes {
    flex: 1;
    display: flex;
    min-height: 0;
}
.tree {
    width: 219px;
    padding: 0 1px;
}
.tree li {
    display: flex;
    align-items: center;
    gap: 5px;
    height: 21px;
    padding-left: 28px;
    border: 1px solid transparent;
    white-space: nowrap;
}
.tree .sub {
    padding-left: 38px;
}
.tree .folders {
    margin-top: 126px;
}
.tree .selected {
    border-color: #d9d9d9;
    border-radius: 3px 0 0 3px;
    background: linear-gradient(#fafafa, #e6e6e6);
}
.scrollbar {
    display: flex;
    flex-direction: column;
    align-items: center;
    width: 17px;
    padding: 7px 0;
    background: #f0f0f0;
}
.scrollbar .arrow {
    border-top-color: #444;
}
.thumb {
    width: 15px;
    height: 145px;
    margin: auto 0 8px;
    border: 1px solid #979797;
    border-radius: 2px;
    background:
        repeating-linear-gradient(#555 0 1px, transparent 1px 3px) center / 7px 8px no-repeat,
        linear-gradient(90deg, #f4f4f4, #e6e6e8 45%, #cfcfd3 50%, #c8c8cc);
}
.files {
    flex: 1;
    padding-left: 15px;
    border-left: 1px solid #d6e5f5;
}
table {
    width: 577px;
    table-layout: fixed;
    border-collapse: collapse;
}
.c-name { width: 257px; }
.c-date { width: 120px; }
.c-type { width: 120px; }
.c-size { width: 80px; }
th {
    position: relative;
    height: 31px;
    padding: 0 0 7px 6px;
    border-right: 1px solid #e0eaf4;
    font-weight: normal;
    text-align: left;
    color: #4c607a;
}
th:first-child {
    padding-left: 3px;
}
.sort {
    position: absolute;
    top: 1px;
    left: 50%;
    margin-left: -4px;
    border: 4px solid transparent;
    border-top: none;
    border-bottom-color: #6ea4c4;
}
td {
    height: 21px;
    padding: 0 0 0 6px;
    color: #6d6d6d;
    white-space: nowrap;
}
td:first-child {
    display: flex;
    align-items: center;
    gap: 5px;
    padding-left: 3px;
    color: #000;
}
td:last-child {
    padding-right: 7px;
    text-align: right;
}
tbody .selected {
    border-radius: 3px;
    outline: 1px solid #d4d4d4;
    outline-offset: -1px;
    background: linear-gradient(#fafafa, #e4e4e4);
}
.details {
    display: flex;
    gap: 14px;
    height: 53px;
    padding: 3px 18px;
    border-top: 1px solid #ccd9ea;
    background: #f1f4fc;
    color: #1e395b;
}
.preview {
    width: 45px;
    height: 45px;
}
.props {
    display: grid;
    grid-template-columns: 56px 92px 134px auto auto;
    grid-auto-rows: 18px;
    align-content: start;
    align-items: center;
    column-gap: 4px;
    padding-top: 2px;
    white-space: nowrap;
}
.props strong {
    font-size: 12px;
    font-weight: normal;
    color: #000;
}
.key {
    text-align: right;
}
.key,
.kind {
    color: #5a6779;
}

/* Dialog */
.dialog {
    top: 243px;
    left: 246px;
    width: 482px;
    background: linear-gradient(rgba(160, 200, 235, 0.55), rgba(200, 228, 250, 0.5) 40%, rgba(150, 195, 235, 0.5));
    box-shadow: inset 0 0 0 1px rgba(255, 255, 255, 0.7), 0 3px 14px 2px rgba(0, 0, 0, 0.85);
}
.dialog-title {
    display: flex;
    justify-content: space-between;
    height: 28px;
}
.dialog h1 {
    margin: 6px 0 0;
    font-size: 11px;
    font-weight: normal;
    text-shadow: 0 0 6px #fff, 0 0 10px #fff;
}
.dialog-close {
    display: grid;
    place-items: center;
    width: 47px;
    height: 19px;
    border: 1px solid #5c2420;
    border-top: none;
    border-radius: 0 0 4px 4px;
    background: linear-gradient(#e8a898, #d4705c 45%, #b8301c 50%, #d46a44);
    box-shadow: inset 0 0 0 1px rgba(255, 220, 210, 0.5);
}
.dialog-client {
    border: 1px solid #4a5a6c;
    background: #f0f0f0;
    box-shadow: 0 0 0 1px rgba(255, 255, 255, 0.6);
}
.dialog-body {
    display: flex;
    gap: 8px;
    padding: 26px 26px 26px 25px;
    background: #fff;
}
.dialog-body svg {
    width: 32px;
    height: 32px;
}
.dialog-body p {
    margin: 0;
}
.dialog-footer {
    display: flex;
    justify-content: flex-end;
    padding: 12px 9px 11px;
}
.dialog-footer button {
    width: 88px;
    height: 26px;
    border: 1px solid #646464;
    border-width: 1px 2px 2px 1px;
    background: #f0f0f0;
    box-shadow: inset 1px 1px #fff, inset -1px -1px #a0a0a0;
}

/* Taskbar */
.taskbar {
    position: relative;
    display: flex;
    align-items: center;
    height: 40px;
    border-top: 1px solid #12395e;
    background: linear-gradient(90deg, rgba(20, 60, 110, 0.5), rgba(50, 150, 230, 0.3) 160px, rgba(60, 150, 250, 0.4) 60%, rgba(40, 120, 230, 0.5) 81%, rgba(30, 80, 140, 0.6) 84%);
    box-shadow: inset 0 1px rgba(190, 230, 255, 0.6);
    backdrop-filter: blur(2px);
}
.start {
    margin-left: 8px;
}
.start svg {
    width: 38px;
    height: 38px;
}
.chrome {
    margin: 0 18px 0 29px;
}
.chrome svg {
    width: 28px;
    height: 28px;
}
.task {
    display: grid;
    place-items: center;
    align-self: stretch;
    width: 60px;
    margin-right: 2px;
    border: 1px solid #1c4c74;
    border-radius: 3px;
    background: linear-gradient(160deg, rgba(220, 245, 255, 0.75), rgba(160, 220, 245, 0.5) 50%, rgba(120, 200, 245, 0.5));
    box-shadow: inset 0 0 0 1px rgba(255, 255, 255, 0.7);
}
.task.active {
    background: linear-gradient(160deg, rgba(255, 255, 255, 0.9), rgba(210, 240, 252, 0.8) 50%, rgba(150, 220, 250, 0.7));
}
.task svg {
    width: 32px;
    height: 30px;
}
.tray {
    display: flex;
    align-items: center;
    align-self: stretch;
    gap: 8px;
    margin-left: auto;
    color: #fff;
}
.tray .arrow.up {
    margin-right: 5px;
    border-bottom-color: #fff;
}
.tray time {
    width: 72px;
    line-height: 17px;
    text-align: center;
}
.show-desktop {
    align-self: stretch;
    width: 14px;
    margin-left: -4px;
    border: 1px solid #0c2c50;
    background: linear-gradient(rgba(200, 225, 245, 0.4), rgba(30, 80, 140, 0.4) 50%, rgba(60, 130, 200, 0.5));
    box-shadow: inset 0 0 0 1px rgba(180, 215, 245, 0.5);
}
```
